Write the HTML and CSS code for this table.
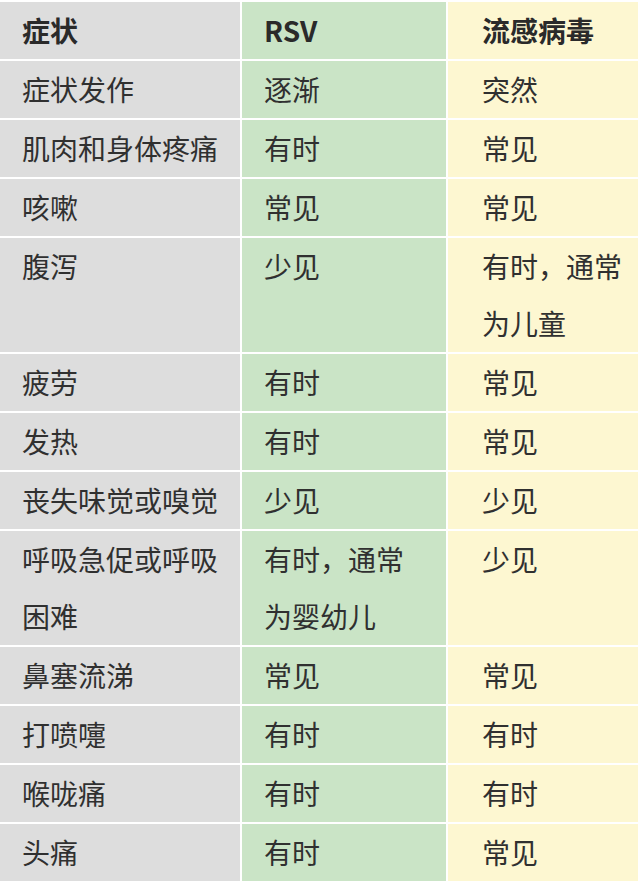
FILE: index.html
```html
<!DOCTYPE html>
<html lang="zh-CN">
<head>
<meta charset="utf-8">
<link rel="stylesheet" href="styles.css">
</head>
<body>
<div class="table">
  <div class="cell c1 head">症状</div><div class="cell c2 head">RSV</div><div class="cell c3 head">流感病毒</div>
  <div class="cell c1">症状发作</div><div class="cell c2">逐渐</div><div class="cell c3">突然</div>
  <div class="cell c1">肌肉和身体疼痛</div><div class="cell c2">有时</div><div class="cell c3">常见</div>
  <div class="cell c1">咳嗽</div><div class="cell c2">常见</div><div class="cell c3">常见</div>
  <div class="cell c1">腹泻</div><div class="cell c2">少见</div><div class="cell c3">有时，通常<br>为儿童</div>
  <div class="cell c1">疲劳</div><div class="cell c2">有时</div><div class="cell c3">常见</div>
  <div class="cell c1">发热</div><div class="cell c2">有时</div><div class="cell c3">常见</div>
  <div class="cell c1">丧失味觉或嗅觉</div><div class="cell c2">少见</div><div class="cell c3">少见</div>
  <div class="cell c1">呼吸急促或呼吸<br>困难</div><div class="cell c2">有时，通常<br>为婴幼儿</div><div class="cell c3">少见</div>
  <div class="cell c1">鼻塞流涕</div><div class="cell c2">常见</div><div class="cell c3">常见</div>
  <div class="cell c1">打喷嚏</div><div class="cell c2">有时</div><div class="cell c3">有时</div>
  <div class="cell c1">喉咙痛</div><div class="cell c2">有时</div><div class="cell c3">有时</div>
  <div class="cell c1">头痛</div><div class="cell c2">有时</div><div class="cell c3">常见</div>
</div>
</body>
</html>
```
FILE: styles.css
```css
html, body {
  margin: 0;
  padding: 0;
  overflow: hidden;
  background: #ffffff;
}
.table {
  width: 640px;
  box-sizing: border-box;
  padding: 2px 2px 0 0;
  display: grid;
  grid-template-columns: 240px 204px 190px;
  gap: 2px;
  background: #ffffff;
  font-family: "Noto Sans CJK SC", "Noto Sans", sans-serif;
  font-size: 28px;
  line-height: 57px;
  color: #303030;
}
.cell {
  padding: 0 0 0 22px;
  white-space: nowrap;
}
.c1 { background: #dddddd; }
.c2 { background: #cae4c6; }
.c3 { background: #fdf7d1; padding-left: 34px; }
.head { font-weight: 700; color: #2a2a2a; }
```
